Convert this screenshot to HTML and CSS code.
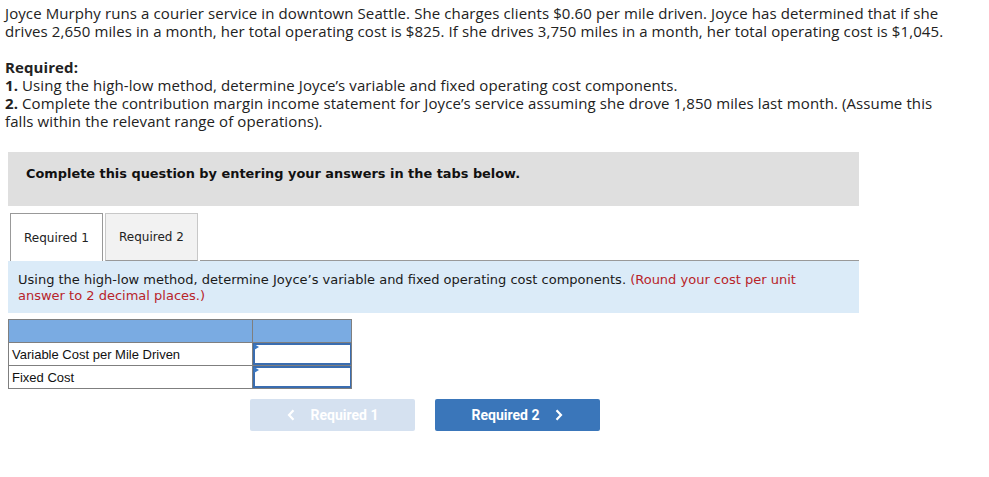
FILE: index.html
```html
<!DOCTYPE html>
<html>
<head>
<meta charset="utf-8">
<link rel="stylesheet" href="styles.css">
</head>
<body>
<div class="question">
  <p class="intro">Joyce Murphy runs a courier service in downtown Seattle. She charges clients $0.60 per mile driven. Joyce has determined that if she<br>drives 2,650 miles in a month, her total operating cost is $825. If she drives 3,750 miles in a month, her total operating cost is $1,045.</p>
  <p class="req"><b>Required:</b><br><b>1.</b> Using the high-low method, determine Joyce’s variable and fixed operating cost components.<br><b>2.</b> Complete the contribution margin income statement for Joyce’s service assuming she drove 1,850 miles last month. (Assume this<br>falls within the relevant range of operations).</p>
</div>
<div class="panel">
  <div class="banner">Complete this question by entering your answers in the tabs below.</div>
  <div class="tabs">
    <div class="tab active">Required 1</div>
    <div class="tab">Required 2</div>
    <div class="tab-rest"></div>
  </div>
  <div class="info">Using the high-low method, determine Joyce’s variable and fixed operating cost components. <span class="hint">(Round your cost per unit<br>answer to 2 decimal places.)</span></div>
  <table class="grid">
    <tr class="head"><td class="c1"></td><td class="c2"></td></tr>
    <tr><td class="c1">Variable Cost per Mile Driven</td><td class="c2"><div class="input"></div></td></tr>
    <tr><td class="c1">Fixed Cost</td><td class="c2"><div class="input"></div></td></tr>
  </table>
  <div class="nav">
    <div class="btn prev"><svg class="chev" width="8" height="12" viewBox="0 0 8 12"><path d="M6.5 1.2 L2 6 L6.5 10.8" fill="none" stroke="#fff" stroke-width="2.2"/></svg><span>Required 1</span></div>
    <div class="btn next"><span>Required 2</span><svg class="chev" width="8" height="12" viewBox="0 0 8 12"><path d="M1.5 1.2 L6 6 L1.5 10.8" fill="none" stroke="#fff" stroke-width="2.2"/></svg></div>
  </div>
</div>
</body>
</html>
```
FILE: styles.css
```css
body {
  margin: 0;
  padding: 4px 5px 0 5px;
  background: #fff;
  font-family: "Open Sans", "Lato", sans-serif;
  color: #222;
}
.question p {
  margin: 0;
  font-size: 15px;
  letter-spacing: 0.1px;
  line-height: 18px;
  white-space: nowrap;
}
.intro { color: #222; }
.req { margin-top: 18px !important; }
.req b { font-weight: 700; }
.panel {
  margin-left: 3px;
  width: 851px;
}
.banner {
  margin-top: 22px;
  background: #dfdfdf;
  height: 54px;
  box-sizing: border-box;
  padding: 14px 18px 0 18px;
  line-height: 16px;
  font-family: "DejaVu Sans", Verdana, sans-serif;
  font-weight: bold;
  font-size: 12.9px;
  color: #111;
}
.tabs {
  display: flex;
  margin-top: 7px;
  height: 48px;
}
.tab {
  box-sizing: border-box;
  width: 93px;
  height: 48px;
  border: 1px solid #c8c8c8;
  border-bottom: 1px solid #999;
  background: #f2f2f2;
  display: flex;
  align-items: center;
  justify-content: center;
  font-family: "DejaVu Sans", Verdana, sans-serif;
  font-size: 12px;
  color: #222;
  margin-right: 2px;
}
.tab.active {
  margin-left: 2px;
  background: #fff;
  border: 1px solid #999;
  border-bottom: none;
}
.tab-rest {
  flex: 1;
  border-bottom: 1px solid #999;
}
.info {
  background: #dbebf8;
  height: 52px;
  box-sizing: border-box;
  padding: 11px 10px 0 10px;
  font-family: "DejaVu Sans", Verdana, sans-serif;
  font-size: 13px;
  line-height: 16px;
  color: #1a1a1a;
  white-space: nowrap;
}
.hint { color: #b8242a; }
.grid {
  margin-top: 6px;
  border-collapse: collapse;
  font-family: "Liberation Sans", Arial, sans-serif;
  font-size: 13px;
  color: #111;
}
.grid td {
  border: 1px solid #7f7f7f;
  height: 22px;
  padding: 0;
}
.grid .c1 { width: 240px; padding-left: 3px; }
.grid .c2 { width: 98px; }
.grid .head td { background: #7aabe2; }
.input {
  box-sizing: border-box;
  height: 22px;
  border: 2px solid #3a6db0;
  border-right-width: 1px;
  background: #fff;
  position: relative;
}
.input::before {
  content: "";
  position: absolute;
  left: -1px;
  top: -1px;
  border-left: 5px solid #3a78c2;
  border-top: 3px solid transparent;
  border-bottom: 3px solid transparent;
}
.nav {
  display: flex;
  gap: 20px;
  margin-top: 10px;
  margin-left: 242px;
}
.btn {
  width: 165px;
  height: 32px;
  border-radius: 2px;
  display: flex;
  align-items: center;
  justify-content: center;
  font-family: "Roboto", "Liberation Sans", sans-serif;
  font-weight: bold;
  font-size: 14px;
  color: #fff;
  gap: 16px;
}
.btn .chev { display: block; }
.prev { background: #d5e1f0; }
.next { background: #3a76ba; }
```
